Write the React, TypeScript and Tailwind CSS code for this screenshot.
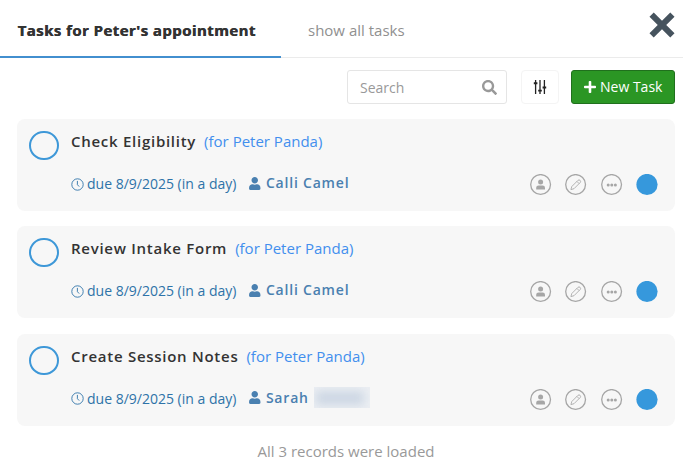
import type { ReactNode } from "react";
import { FaPlus, FaSearch, FaUser } from "react-icons/fa";

interface Task {
  title: string;
  assignee: string;
  masked?: boolean;
}

const tasks: Task[] = [
  { title: "Check Eligibility", assignee: "Calli Camel" },
  { title: "Review Intake Form", assignee: "Calli Camel" },
  { title: "Create Session Notes", assignee: "Sarah", masked: true },
];

function ClockIcon() {
  return (
    <svg viewBox="0 0 13 13" className="h-[13px] w-[13px]" fill="none" stroke="currentColor">
      <circle cx="6.5" cy="6.5" r="5.7" strokeWidth="0.9" />
      <path d="M6.4 2.9v3.8l1.8 1.9" strokeWidth="0.9" />
    </svg>
  );
}

function SlidersIcon() {
  return (
    <svg viewBox="0 0 14 16" className="h-4 w-3.5" fill="none" stroke="#222" strokeWidth="1.3">
      <path d="M2.6 1v14M7 1v14M11.4 1v14" />
      <path d="M0.8 4.2h3.6M5.2 11.6h3.6M9.6 8.5h3.6" strokeWidth="1.9" />
    </svg>
  );
}

function CloseIcon() {
  return (
    <svg viewBox="0 0 26 26" className="h-[26px] w-[26px]" stroke="#46535e" strokeWidth="6">
      <path d="M2.6 2.6l20.8 20.8M23.4 2.6L2.6 23.4" />
    </svg>
  );
}

function ActionButton({ label, children }: { label: string; children: ReactNode }) {
  return (
    <button aria-label={label} className="h-[22px] w-[22px] text-[#a6a6a6]">
      <svg viewBox="0 0 22 22" className="h-[22px] w-[22px]" fill="none" stroke="currentColor">
        <circle cx="10.6" cy="10.5" r="9.9" strokeWidth="1.3" />
        {children}
      </svg>
    </button>
  );
}

function TaskCard({ title, assignee, masked }: Task) {
  return (
    <div className="flex h-[92px] rounded-lg bg-[#f7f7f7] pr-[17px] pl-3">
      <button
        aria-label="Complete task"
        className="mt-3 h-[29px] w-[30px] shrink-0 rounded-full border-2 border-[#3e98d8]"
      />
      <div className="ml-3 flex-1">
        <div className="mt-3 flex h-5 items-baseline text-[15px] leading-5 whitespace-nowrap">
          <span className="font-semibold tracking-[0.73px] text-[#333]">{title}</span>
          <span className="ml-2 text-[#428fee]">(for Peter Panda)</span>
        </div>
        <div className="mt-[23px] flex h-5 items-center text-sm leading-5 whitespace-nowrap text-[#2e73a8]">
          <ClockIcon />
          <span className="ml-[3px]">due 8/9/2025 (in a day)</span>
          <FaUser className="mb-0.5 ml-[13px] h-[13px] w-[11.5px] text-[#4a80b0]" />
          <span className="mb-0.5 ml-[5px] font-semibold tracking-[0.8px] text-[#4a80b0]">
            {assignee}
          </span>
          {masked && (
            <span className="mb-[3px] ml-[5px] h-[21px] w-14 overflow-hidden bg-[#eceff3]">
              <span className="mt-1 ml-0.5 block h-3.5 w-12 bg-[#cdd7e4] blur-[5px]" />
            </span>
          )}
        </div>
      </div>
      <div className="mt-[55px] flex h-[22px] gap-[13.5px]">
        <ActionButton label="Assign">
          <g fill="currentColor" stroke="none">
            <circle cx="10.6" cy="7.9" r="2.5" />
            <path d="M6.2 15.4v-1.6q0-2.4 2.4-2.4h4q2.4 0 2.4 2.4v1.6z" />
          </g>
        </ActionButton>
        <ActionButton label="Edit">
          <path
            d="M5.9 15.6l0.9-3.1 6.2-6.2q1.1-0.9 2.1 0.1t0.1 2.1l-6.2 6.2zM11.9 7.4l2.2 2.2"
            strokeWidth="0.85"
          />
        </ActionButton>
        <ActionButton label="More">
          <g fill="currentColor" stroke="none">
            <circle cx="7.2" cy="11.1" r="1.5" />
            <circle cx="10.8" cy="11.1" r="1.5" />
            <circle cx="14.4" cy="11.1" r="1.5" />
          </g>
        </ActionButton>
        <svg viewBox="0 0 22 22" className="h-[22px] w-[22px]">
          <circle cx="11" cy="10.5" r="10.6" fill="#3698dc" />
        </svg>
      </div>
    </div>
  );
}

export default function App() {
  return (
    <div className="h-[476px] w-[683px] overflow-hidden bg-white font-['Open_Sans',sans-serif]">
      <header className="flex h-[58px] border-b border-[#ebebeb]">
        <div className="-mb-px flex w-[281px] items-center border-b-2 border-[#428fcf] pt-1 pl-[17.5px] text-[15px] font-bold tracking-[0.43px] whitespace-nowrap text-[#333] text-shadow-[0.4px_0_0_#333]">
          Tasks for Peter's appointment
        </div>
        <div className="flex items-center pt-1 pl-[27px] text-[15px] whitespace-nowrap text-[#909090]">
          show all tasks
        </div>
        <button aria-label="Close" className="mt-3 mr-2 ml-auto h-[26px]">
          <CloseIcon />
        </button>
      </header>

      <div className="flex justify-end pt-3 pr-2">
        <div className="flex h-[34px] w-40 items-center justify-between rounded-[3px] border border-[#e5e5e5] pt-px pr-[9px] pl-3 text-sm text-[#999]">
          <span>Search</span>
          <FaSearch className="h-[15px] w-[15px]" />
        </div>
        <button
          aria-label="Filter"
          className="ml-3.5 flex h-[34px] w-[38px] items-center justify-center rounded-sm border border-[#f4f4f4]"
        >
          <SlidersIcon />
        </button>
        <button className="ml-3 flex h-[34px] w-[104px] items-center rounded-[3px] border border-[#20701d] bg-[#2b9624] pl-3 text-sm whitespace-nowrap text-white">
          <FaPlus className="mr-1 h-[14px] w-3" />
          New Task
        </button>
      </div>

      <main className="mt-[15px] flex flex-col gap-[15.4px] pr-2 pl-[17px]">
        {tasks.map((task) => (
          <TaskCard key={task.title} {...task} />
        ))}
      </main>
      <p className="mt-[15px] pl-[9px] text-center text-[15px] leading-5 text-[#999]">
        All 3 records were loaded
      </p>
    </div>
  );
}
